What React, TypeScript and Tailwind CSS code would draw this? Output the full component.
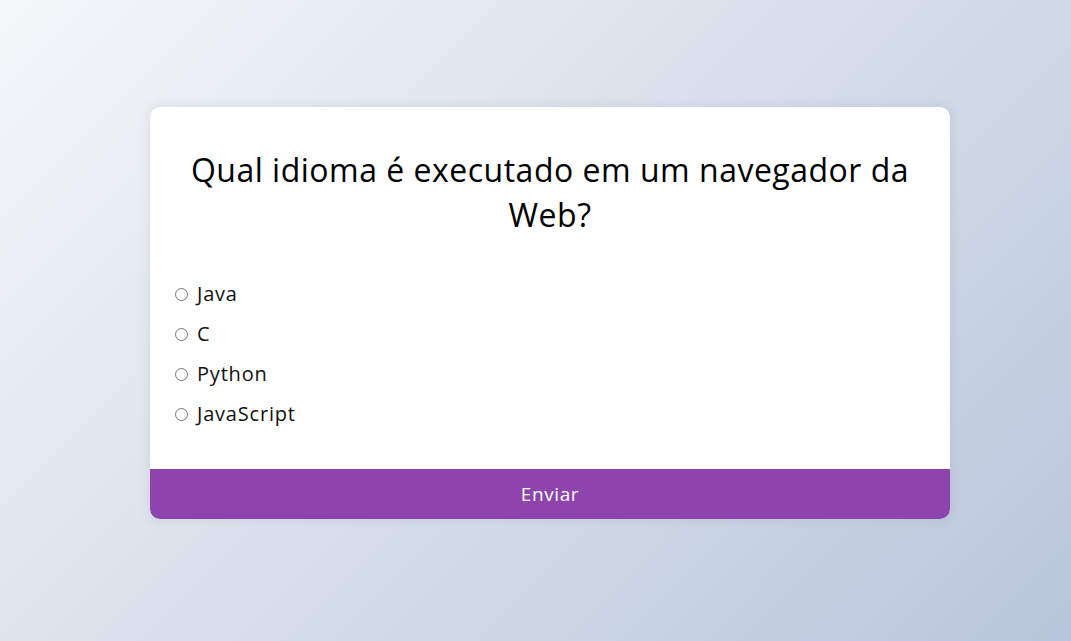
import React from "react";

const options = ["Java", "C", "Python", "JavaScript"];

export default function App() {
  return (
    <div
      className="min-h-screen w-full bg-[linear-gradient(315deg,#b8c6db_0%,#f5f7fa_100%)] pt-[107px] pl-[150px]"
      style={{ height: 641 }}
    >
      <div
        className="w-[800px] bg-white rounded-[10px] overflow-hidden shadow-[0_0_10px_2px_rgba(100,100,100,0.1)]"
        style={{ fontFamily: '"Open Sans", sans-serif' }}
      >
        <div className="pt-[40px] pb-[35px]">
          <h2 className="mx-auto w-[760px] text-center text-[32px] leading-[45px] font-medium text-black tracking-[0.5px]">
            Qual idioma é executado em um navegador da Web?
          </h2>
          <ul className="mt-[37px] pl-[25px]">
            {options.map((o) => (
              <li key={o} className="h-[40px] flex items-center">
                <span className="w-[13px] h-[13px] rounded-full border border-[#767676] bg-white shrink-0" />
                <span className="ml-[9px] text-[20px] text-[#111] tracking-[0.8px]">{o}</span>
              </li>
            ))}
          </ul>
        </div>
        <button className="block w-full h-[50px] bg-[#8e44ad] text-white text-[19px] tracking-[0.6px]">
          Enviar
        </button>
      </div>
    </div>
  );
}
